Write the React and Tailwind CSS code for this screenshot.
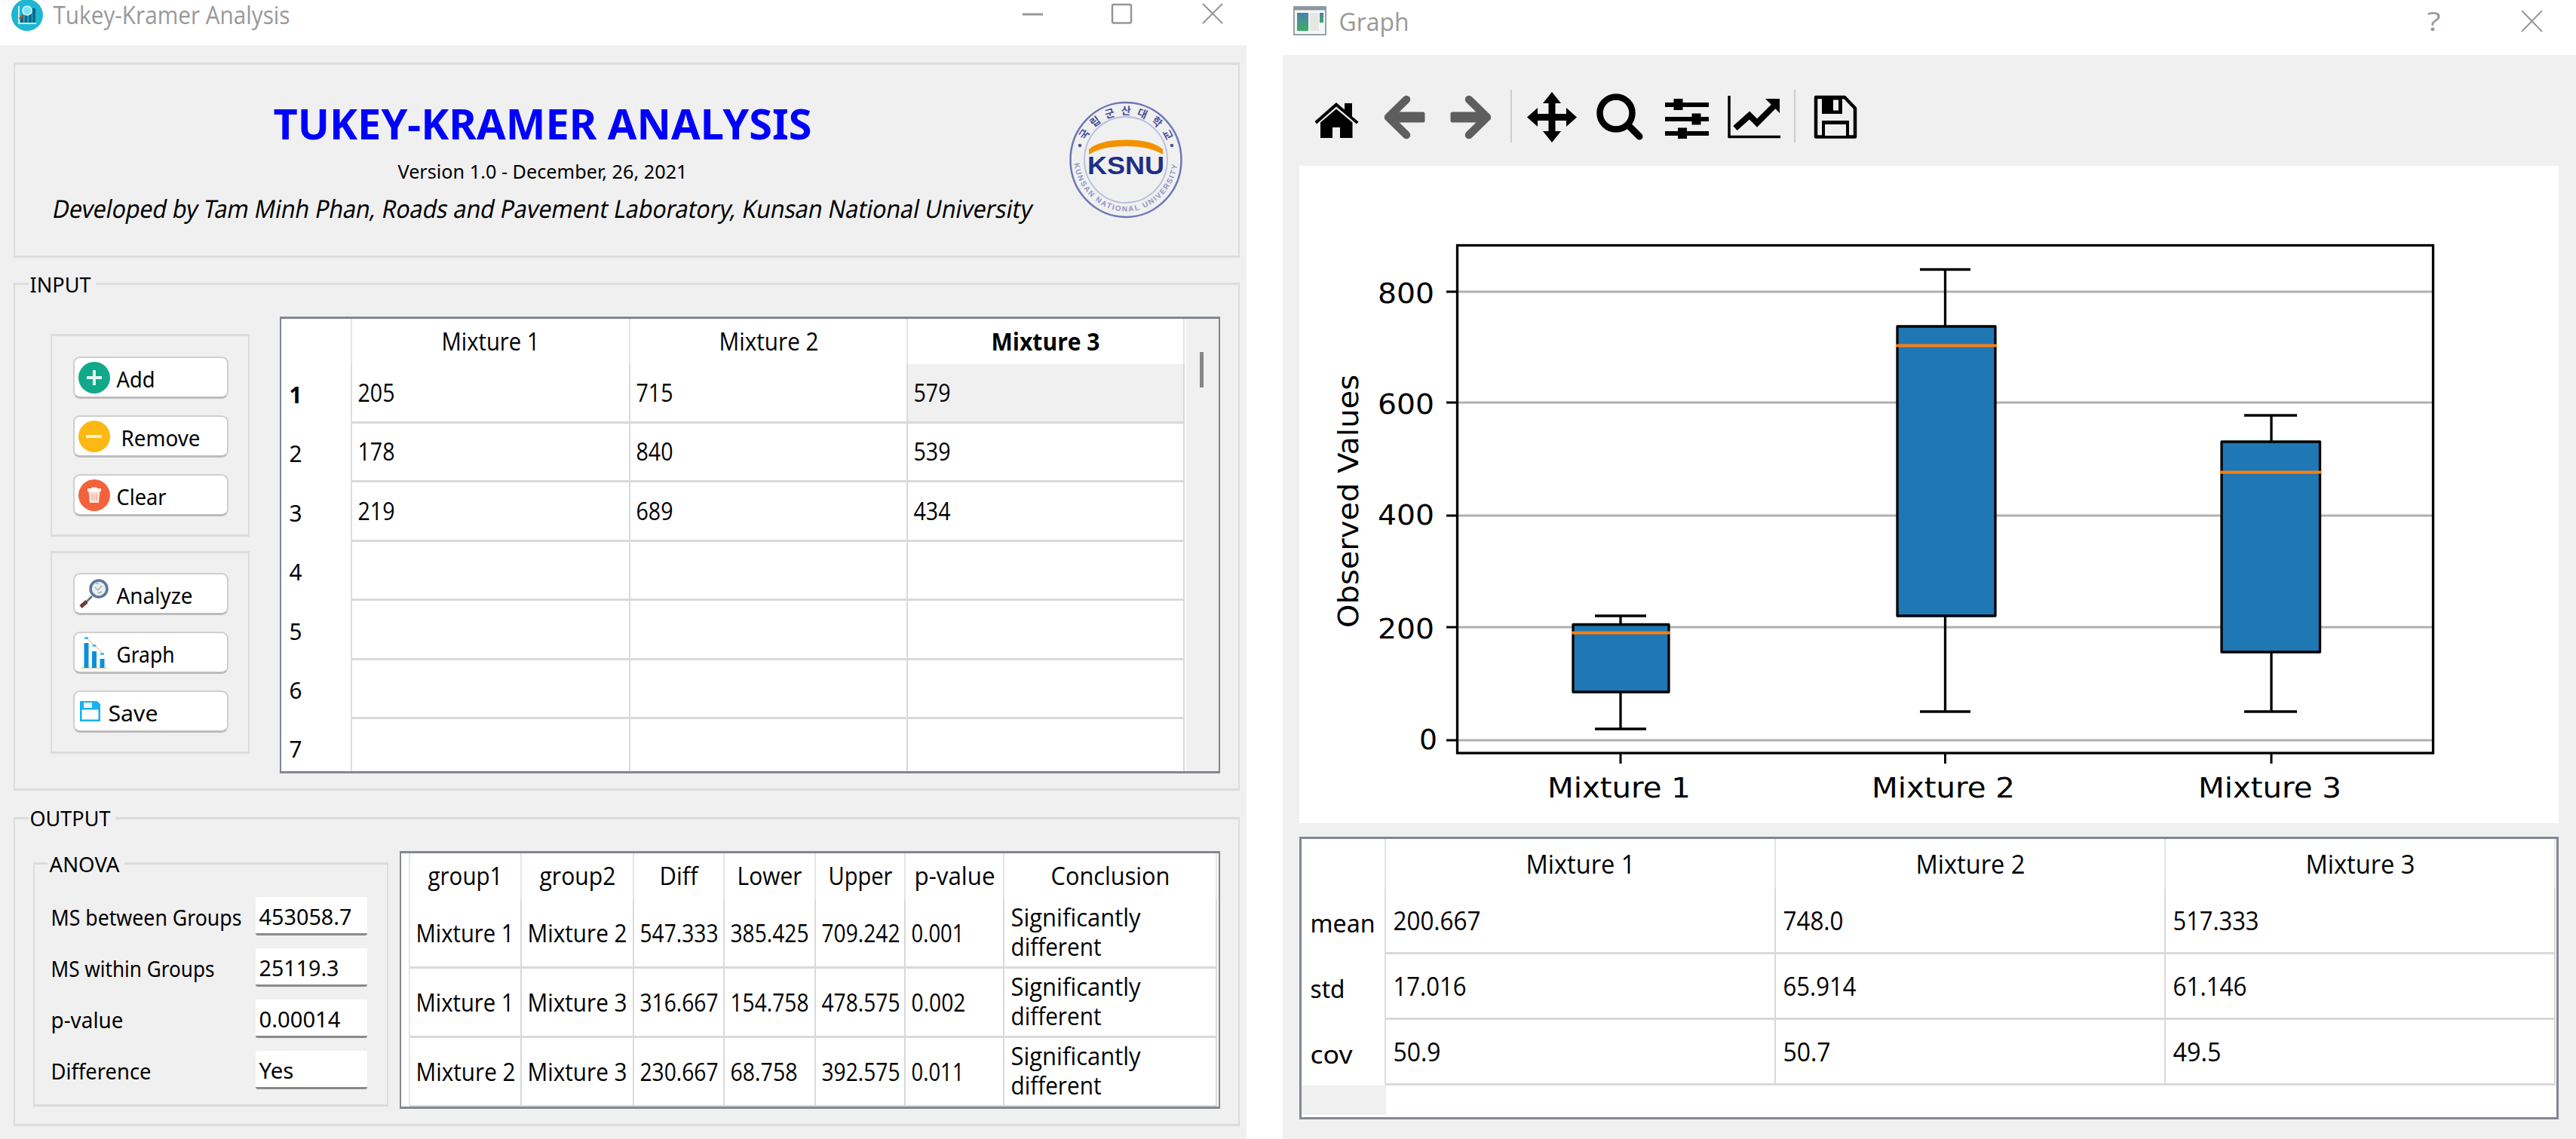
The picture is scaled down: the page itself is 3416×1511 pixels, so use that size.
import { useLayoutEffect, useRef } from "react";

const SEGOE = "font-['Open_Sans','Noto_Sans',sans-serif]";
const TAHOMA = "font-['Noto_Sans','Open_Sans',sans-serif]";

/* A single line of text condensed or widened to take exactly w pixels. */
function Fit({ w, children, className = "", skew = 0 }) {
  const ref = useRef(null);
  useLayoutEffect(() => {
    const el = ref.current;
    el.style.transform = "none";
    const natural = el.getBoundingClientRect().width;
    el.style.transform = `translateX(-1.5px) scaleX(${(w + 3) / natural}) skewX(${skew}deg)`;
  });
  return (
    <span className={`block shrink-0 whitespace-nowrap ${className}`} style={{ width: w }}>
      <span ref={ref} className="inline-block origin-left">
        {children}
      </span>
    </span>
  );
}

function GroupBox({ label, labelClass = "", className = "", children }) {
  return (
    <section className={`relative border-x-2 border-y-[3px] border-[#dcdcdc] ${className}`}>
      {label && <div className={`absolute bg-[#f0f0f0] ${TAHOMA} text-[28px] leading-[30px] ${labelClass}`}>{label}</div>}
      {children}
    </section>
  );
}

function AppIcon() {
  return (
    <svg className="h-[42px] w-[42px]" viewBox="0 0 42 42">
      <circle cx="21" cy="21" r="21" fill="#1fb6d2" />
      <path d="M10 9v23h23" fill="none" stroke="#c9eef5" strokeWidth="2" />
      <rect x="12" y="23" width="4" height="8" fill="#0c6a8c" />
      <rect x="17.500" y="18" width="4" height="13" fill="#0c6a8c" />
      <rect x="23" y="20" width="4" height="11" fill="#0c6a8c" />
      <rect x="28" y="12" width="4" height="19" fill="#0c6a8c" />
      <path d="M16 21l-5 5" stroke="#a5542c" strokeWidth="3" />
      <circle cx="21" cy="15" r="6" fill="#7fe3f5" stroke="#d5f6fb" strokeWidth="1.500" />
    </svg>
  );
}

function Logo() {
  return (
    <svg className="h-[156px] w-[152px]" viewBox="1418 134 152 156">
      <defs>
        <path id="ringTop" d="M1434.500 212a59.500 60 0 0 1 119 0" />
        <path id="ringBottom" d="M1424.500 205a69.500 75.500 0 0 0 139 0" />
      </defs>
      <ellipse cx="1494" cy="212" rx="73.500" ry="76" fill="none" stroke="#6f76b5" strokeWidth="2.500" />
      <ellipse cx="1494" cy="212" rx="55" ry="57" fill="none" stroke="#b9bcdc" strokeWidth="1.800" />
      <text fill="#4a5199" fontSize="14" fontWeight="700" fontFamily="Noto Sans CJK KR, sans-serif" textAnchor="middle" letterSpacing="7.500">
        <textPath href="#ringTop" startOffset="52%">국립군산대학교</textPath>
      </text>
      <text fill="#9094c4" fontSize="10" fontWeight="700" fontFamily="Liberation Sans, sans-serif" textAnchor="middle" letterSpacing="1.700">
        <textPath href="#ringBottom" startOffset="50%">KUNSAN NATIONAL UNIVERSITY</textPath>
      </text>
      <circle cx="1433" cy="193" r="2.300" fill="#4a5199" />
      <circle cx="1555" cy="193" r="2.300" fill="#4a5199" />
      <path d="M1445 205v-7q14-12.500 49-12.500t49 12.500v7q-17-11-49-11t-49 11z" fill="#f39200" />
      <text x="1443" y="231" textLength="102" lengthAdjust="spacingAndGlyphs" fill="#1f2f86" fontSize="34" fontWeight="700" fontFamily="Liberation Sans, sans-serif">KSNU</text>
    </svg>
  );
}

function Header() {
  return (
    <GroupBox className="flex h-[259px]">
      <div className={`flex w-[1352px] flex-col items-center pl-[47px] ${TAHOMA} text-black`}>
        <Fit w={711} className="mt-[48px] text-[55px] leading-[60px] font-bold text-[#0000ff]">TUKEY-KRAMER ANALYSIS</Fit>
        <Fit w={381} className="mt-[18px] text-[25px] leading-[30px]">Version 1.0 - December, 26, 2021</Fit>
        <Fit w={1296} skew={-12} className="mt-[15px] text-[33px] leading-[40px]">Developed by Tam Minh Phan, Roads and Pavement Laboratory, Kunsan National University</Fit>
      </div>
      <div className="mt-[48px] ml-[45px]">
        <Logo />
      </div>
    </GroupBox>
  );
}

const plusIcon = (
  <svg className="size-[42px]" viewBox="0 0 42 42">
    <circle cx="21" cy="21" r="21" fill="#12a88a" />
    <path d="M21 11v20M11 21h20" stroke="#e3f7f2" strokeWidth="4" />
  </svg>
);
const minusIcon = (
  <svg className="size-[42px]" viewBox="0 0 42 42">
    <circle cx="21" cy="21" r="21" fill="#fdb813" />
    <path d="M10 21h21" stroke="#fff1cc" strokeWidth="4" />
  </svg>
);
const trashIcon = (
  <svg className="size-[42px]" viewBox="0 0 42 42">
    <circle cx="21" cy="21" r="21" fill="#f4623a" />
    <path d="M12 12h5l1-1.500h6l1 1.500h5v4H12z" fill="#fff" />
    <path d="M13.500 16h15l-1.500 15H15z" fill="#fbe3dc" />
    <path d="M18 19v9M21 19v9M24 19v9" stroke="#eab5a5" strokeWidth="1.500" />
  </svg>
);
const lensIcon = (
  <svg className="h-[42px] w-[42px]" viewBox="104 768 42 42">
    <path d="M122 792l-8 8" stroke="#5f6f7d" strokeWidth="2.500" />
    <path d="M107 806l8-7" stroke="#6b4030" strokeWidth="5" />
    <circle cx="131" cy="782" r="11" fill="#e8edf0" stroke="#5b7899" strokeWidth="3.500" />
    <path d="M126 780l4 4 5-6M130 788l5-2M127 775h4" fill="none" stroke="#a6aeb4" strokeWidth="1.500" />
  </svg>
);
const barsIcon = (
  <svg className="h-[42px] w-[42px]" viewBox="104 846 42 42">
    <path d="M114 847l22 20" stroke="#f3d3b0" strokeWidth="1.500" />
    <path d="M108 887.300h34" stroke="#ecc9a4" strokeWidth="1.500" />
    <path d="M112 847.500h5M122.500 857.500h5M133 868.500h5" stroke="#35b6ee" strokeWidth="2.500" />
    <path d="M111.500 854h6v33h-6zM122 865h6v22h-6zM132.500 875h6v12h-6z" fill="#0c8fdc" />
  </svg>
);
const diskIcon = (
  <svg className="h-[42px] w-[31px]" viewBox="104 925 31 42">
    <path d="M106 932h22.500l4.500 4v23h-27z" fill="#16b1f1" />
    <path d="M111 934h11v7h-11z" fill="#e6f8ff" />
    <path d="M108.500 943.500h22v13h-22z" fill="#fff" />
  </svg>
);

function Button({ icon, w, children, gap = "gap-[10px]" }) {
  return (
    <button className={`flex h-[56px] w-[206px] items-center rounded-[9px] border-2 border-b-[3px] border-[#cfcfcf] border-b-[#bcbcbc] bg-white pl-[5px] ${gap}`}>
      {icon}
      <Fit w={w} className={`pt-[5px] text-left ${TAHOMA} text-[29px] leading-[32px]`}>{children}</Fit>
    </button>
  );
}

function ButtonGroups() {
  return (
    <div className="mt-[65px] ml-[47px] flex w-[264px] flex-col gap-[19px]">
      <GroupBox className="flex h-[269px] flex-col gap-[22px] pt-[27px] pl-[28px]">
        <Button icon={plusIcon} w={48}>Add</Button>
        <Button icon={minusIcon} w={102} gap="gap-[16px]">Remove</Button>
        <Button icon={trashIcon} w={63}>Clear</Button>
      </GroupBox>
      <GroupBox className="flex h-[269px] flex-col gap-[22px] pt-[26px] pl-[28px]">
        <Button icon={lensIcon} w={98}>Analyze</Button>
        <Button icon={barsIcon} w={74}>Graph</Button>
        <Button icon={diskIcon} w={63}>Save</Button>
      </GroupBox>
    </div>
  );
}

const inputRows = [
  ["1", "205", "715", "579"],
  ["2", "178", "840", "539"],
  ["3", "219", "689", "434"],
  ["4", "", "", ""],
  ["5", "", "", ""],
  ["6", "", "", ""],
  ["7", "", "", ""],
];

function InputTable() {
  return (
    <div className={`mt-[42px] ml-[40px] flex h-[606px] w-[1247px] overflow-hidden border-x-2 border-y-[3px] border-[#828790] bg-white ${SEGOE} text-[32px]`}>
      <div className="w-[1198px]">
        <div className="grid h-[60px] grid-cols-[94px_369px_368px_367px] leading-[60px]">
          <div className="border-r-2 border-[#e5e5e5]" />
          <div className="flex justify-center border-r-2 border-[#e5e5e5]"><Fit w={127}>Mixture 1</Fit></div>
          <div className="flex justify-center border-r-2 border-[#e5e5e5]"><Fit w={129}>Mixture 2</Fit></div>
          <div className="flex justify-center border-r-2 border-[#e5e5e5]"><Fit w={141} className="font-bold">Mixture 3</Fit></div>
        </div>
        {inputRows.map((row, r) => (
          <div key={row[0]} className="grid h-[78.4px] grid-cols-[94px_369px_368px_367px] leading-[76px]">
            <div className={`border-r-2 border-[#dedede] pt-[3px] pl-[12px] ${TAHOMA} text-[30px] ${r === 0 ? "font-bold" : ""}`}>
              <Fit w={14}>{row[0]}</Fit>
            </div>
            {row.slice(1).map((v, c) => (
              <div key={c} className={`border-r-2 border-b-[3px] border-[#d9d9d9] pl-[9px] ${r === 0 && c === 2 ? "bg-[#f0f0f0]" : ""}`}>
                {v && <Fit w={46}>{v}</Fit>}
              </div>
            ))}
          </div>
        ))}
      </div>
      <div className="ml-[2px] flex-1 bg-[#f0f0f0]">
        <div className="mt-[44px] ml-[18px] h-[47px] w-[5px] bg-[#868686]" />
      </div>
    </div>
  );
}

const anova = [
  ["MS between Groups", 250, "453058.7", 120],
  ["MS within Groups", 214, "25119.3", 103],
  ["p-value", 93, "0.00014", 105],
  ["Difference", 130, "Yes", 43],
];

function Anova() {
  return (
    <GroupBox className="mt-[57px] ml-[24px] h-[324px] w-[471px] pt-[43px] pl-[23px]" label={<Fit w={90}>ANOVA</Fit>} labelClass="left-[17px] -top-[16px] pl-[4px] pr-[8px]">
      {anova.map(([label, lw, value, vw]) => (
        <div key={label} className={`flex h-[68px] items-start ${TAHOMA} text-[29px]`}>
          <Fit w={lw} className="pt-[8px] leading-[38px]">{label}</Fit>
          <div className="mr-[26px] ml-auto h-[51px] w-[148px] rounded-[3px] border-b-[3px] border-[#8a8a8a] bg-white pt-[7px] pl-[6px] leading-[38px]">
            <Fit w={vw}>{value}</Fit>
          </div>
        </div>
      ))}
    </GroupBox>
  );
}

const resultHead = [["group1", 96], ["group2", 98], ["Diff", 48], ["Lower", 83], ["Upper", 82], ["p-value", 104], ["Conclusion", 155]];
const resultRows = [
  [["Mixture 1", 127], ["Mixture 2", 129], ["547.333", 101], ["385.425", 101], ["709.242", 101], ["0.001", 67]],
  [["Mixture 1", 127], ["Mixture 3", 129], ["316.667", 101], ["154.758", 101], ["478.575", 101], ["0.002", 69]],
  [["Mixture 2", 129], ["Mixture 3", 129], ["230.667", 101], ["68.758", 86], ["392.575", 101], ["0.011", 67]],
];

function ResultTable() {
  return (
    <div className={`mt-[42px] ml-[15px] h-[342px] w-[1088px] overflow-hidden border-x-2 border-y-[3px] border-[#828790] bg-white ${SEGOE} text-[32px]`}>
      <div className="grid h-[61px] grid-cols-[12px_148px_149px_120px_121px_119px_131px_282px] leading-[60px]">
        <div className="border-r-2 border-[#e5e5e5]" />
        {resultHead.map(([t, w]) => (
          <div key={t} className="flex justify-center border-r-2 border-[#e5e5e5]"><Fit w={w}>{t}</Fit></div>
        ))}
      </div>
      {resultRows.map((row, r) => (
        <div key={r} className="grid h-[91.8px] grid-cols-[12px_148px_149px_120px_121px_119px_131px_282px] leading-[89px]">
          <div className="border-r-2 border-[#e5e5e5]" />
          {row.map(([t, w], c) => (
            <div key={c} className="border-r-2 border-b-[3px] border-[#d9d9d9] pl-[9px]"><Fit w={w}>{t}</Fit></div>
          ))}
          <div className="border-r-2 border-b-[3px] border-[#d9d9d9] pt-[4px] pl-[10px] leading-[39px]">
            <Fit w={169}>Significantly</Fit>
            <Fit w={117}>different</Fit>
          </div>
        </div>
      ))}
    </div>
  );
}

function MainWindow() {
  return (
    <div className="h-[1511px] w-[1653px] bg-[#f0f0f0]">
      <div className="flex h-[60px] items-start bg-white">
        <div className="flex h-[39px] flex-1 items-center pl-[15px] text-[#999]">
          <AppIcon />
          <Fit w={311} className={`ml-[15px] ${SEGOE} text-[32px] leading-[38px]`}>Tukey-Kramer Analysis</Fit>
        </div>
        <svg className="mr-[31px] h-[40px] w-[268px]" viewBox="1354 0 268 40" fill="none" stroke="#969696" strokeWidth="2.500">
          <path d="M1356 19h27" strokeWidth="3" />
          <rect x="1475" y="6" width="25" height="24.500" rx="2" />
          <path d="M1595 5l26 26M1621 5l-26 26" strokeWidth="2" />
        </svg>
      </div>
      <div className="pt-[23px] pr-[9px] pl-[18px]">
        <Header />
        <GroupBox className="mt-[33px] flex h-[674px]" label={<Fit w={78}>INPUT</Fit>} labelClass="left-[18px] -top-[16px] pl-[3px] pr-[8px]">
          <ButtonGroups />
          <InputTable />
        </GroupBox>
        <GroupBox className="mt-[35px] flex h-[410px]" label={<Fit w={104}>OUTPUT</Fit>} labelClass="left-[18px] -top-[17px] pl-[3px] pr-[8px]">
          <Anova />
          <ResultTable />
        </GroupBox>
      </div>
    </div>
  );
}

function Tool({ x, w, gap, children }) {
  return (
    <svg className={`h-[70px] shrink-0 ${gap}`} width={w} viewBox={`${x} 119 ${w} 70`} overflow="visible">
      {children}
    </svg>
  );
}

function Toolbar() {
  return (
    <div className="flex h-[147px] items-start pt-[46px]">
      <Tool x={1743} w={58} gap="ml-[42px]">
        <path d="M1743.500 161l28.500-25 11 9.500V137h10v17.500l8.500 7-2.500 3-27-23-26 23z" />
        <path d="M1751 162.500l21-18 21.500 18V183H1777v-14h-10v14h-16z" />
      </Tool>
      <Tool x={1835} w={55} gap="ml-[34px]">
        <path d="M1865 132l-24 23.500 24 23.500" fill="none" stroke="#5e5e5e" strokeWidth="10.500" strokeLinecap="round" strokeLinejoin="round" />
        <path d="M1842 148.500h45q2.500 0 2.500 2.500v9q0 2.500-2.500 2.500h-45z" fill="#5e5e5e" />
      </Tool>
      <Tool x={1923} w={55} gap="ml-[33px]">
        <path d="M1948 132l24 23.500-24 23.500" fill="none" stroke="#5e5e5e" strokeWidth="10.500" strokeLinecap="round" strokeLinejoin="round" />
        <path d="M1971 148.500h-45q-2.500 0-2.500 2.500v9q0 2.500 2.500 2.500h45z" fill="#5e5e5e" />
      </Tool>
      <div className="ml-[25px] h-[70px] w-[2px] bg-[#cdcdcd]" />
      <Tool x={2025} w={66} gap="ml-[20px]">
        <path d="M2058 122l12 15h-7.500v14h14.500v-8l14 12.500-14 12.500v-8h-14.500v14h7.500l-12 15-12-15h7.500v-14H2039v8l-14-12.500 14-12.500v8h14.500v-14h-7.500z" />
      </Tool>
      <Tool x={2117} w={62} gap="ml-[26px]">
        <ellipse cx="2143" cy="150" rx="21.500" ry="21.500" fill="none" stroke="#000" strokeWidth="8.500" />
        <path d="M2160 167l14 14" stroke="#000" strokeWidth="9" strokeLinecap="round" />
      </Tool>
      <Tool x={2208} w={58} gap="ml-[29px]">
        <path d="M2208 139h58M2208 158h58M2208 177h58" stroke="#000" strokeWidth="6" />
        <path d="M2219.500 131h12v15h-12zM2243.500 150.500h12v15h-12zM2225 169.500h12v14.500h-12z" />
      </Tool>
      <Tool x={2292} w={69} gap="ml-[26px]">
        <path d="M2293 127v56M2292 181.500h69" fill="none" stroke="#000" strokeWidth="3.500" />
        <path d="M2301 170l19-17 10 10 24-24" fill="none" stroke="#000" strokeWidth="8" />
        <path d="M2341 131h19v19z" />
      </Tool>
      <div className="ml-[18px] h-[70px] w-[2px] bg-[#cdcdcd]" />
      <Tool x={2405} w={57} gap="ml-[24px]">
        <path d="M2408 129h38l14 14.500v38h-52z" fill="none" stroke="#000" strokeWidth="4.500" strokeLinejoin="round" />
        <path d="M2416 129h27v22h-27zM2416 160h36v22h-36z" />
        <path d="M2431 132.500h7v14h-7zM2420 165h28v15h-28z" fill="#f0f0f0" />
      </Tool>
    </div>
  );
}

const boxes = [
  { x: 2149, l: 2086, r: 2213, cl: 2115, cr: 2183, top: 817, q3: 828.5, med: 839.5, q1: 918, bot: 967 },
  { x: 2579.5, l: 2516, r: 2646, cl: 2546, cr: 2613, top: 357.5, q3: 433, med: 458.5, q1: 817, bot: 944 },
  { x: 3012, l: 2946, r: 3076.5, cl: 2976, cr: 3046, top: 551, q3: 586, med: 626.5, q1: 865, bot: 944 },
];
const yTicks = [["800", 387], ["600", 534], ["400", 684], ["200", 832], ["0", 982]];

function BoxPlot() {
  return (
    <svg className="block h-[872px] w-[1670px] bg-white" viewBox="1723 220 1670 872" fontFamily="DejaVu Sans, sans-serif" fontSize="38" stroke="#000" strokeWidth="3">
      {yTicks.map(([t, y], i) => (
        <g key={t}>
          <path d={`M1933 ${y}H3226`} stroke="#b0b0b0" />
          <path d={`M1918 ${y}h14`} />
          <text x={i === 4 ? 1882 : 1827} y={[401.5, 549, 696, 846.5, 994][i]} textLength={i === 4 ? 24 : 75} lengthAdjust="spacingAndGlyphs" stroke="none">{t}</text>
        </g>
      ))}
      {boxes.map((b, i) => (
        <g key={b.x} fill="none">
          <rect x={b.l} y={b.q3} width={b.r - b.l} height={b.q1 - b.q3} fill="#1f77b4" strokeWidth="3.300" strokeLinejoin="round" />
          <path d={`M${b.x} ${b.q3}V${b.top}M${b.x} ${b.q1}V${b.bot}M${b.cl} ${b.top}H${b.cr}M${b.cl} ${b.bot}H${b.cr}`} strokeWidth="3.300" />
          <path d={`M${b.l - 2} ${b.med}H${b.r + 2}`} stroke="#ff7f0e" strokeWidth="4" />
          <path d={`M${b.x} 999v14`} />
          <text x={[2052, 2482, 2915][i]} y="1057.500" textLength="190" lengthAdjust="spacingAndGlyphs" fill="#000" stroke="none">{`Mixture ${i + 1}`}</text>
        </g>
      ))}
      <rect x="1932.500" y="325.500" width="1294" height="673.500" fill="none" strokeWidth="3.300" />
      <text transform="translate(1801 833) rotate(-90)" textLength="336" lengthAdjust="spacingAndGlyphs" stroke="none">Observed Values</text>
    </svg>
  );
}

const stats = [
  ["mean", 83, ["200.667", 113], ["748.0", 77], ["517.333", 111]],
  ["std", 43, ["17.016", 94], ["65.914", 94], ["61.146", 95]],
  ["cov", 53, ["50.9", 60], ["50.7", 60], ["49.5", 61]],
];

function StatsTable() {
  return (
    <div className={`mt-[18px] h-[375px] w-[1670px] overflow-hidden border-x-[3px] border-y-[3px] border-[#828790] bg-white ${SEGOE} text-[34.500px]`}>
      <div className="grid h-[66px] grid-cols-[112px_517px_517px_517px] leading-[66px]">
        <div className="border-r-2 border-[#e5e5e5]" />
        {["Mixture 1", "Mixture 2", "Mixture 3"].map((t) => (
          <div key={t} className="flex justify-center border-r-2 border-[#e5e5e5]"><Fit w={142}>{t}</Fit></div>
        ))}
      </div>
      {stats.map(([label, lw, ...cells]) => (
        <div key={label} className="grid h-[87px] grid-cols-[112px_517px_517px_517px] leading-[83px]">
          <div className={`border-r-2 border-[#dedede] pt-[4px] pl-[13px] ${TAHOMA} text-[32px]`}><Fit w={lw}>{label}</Fit></div>
          {cells.map(([t, w]) => (
            <div key={t} className="border-r-2 border-b-[3px] border-[#d9d9d9] pl-[11px]"><Fit w={w}>{t}</Fit></div>
          ))}
        </div>
      ))}
      <div className="h-[39px] w-[112px] bg-[#f0f0f0]" />
    </div>
  );
}

function GraphWindow() {
  return (
    <div className="h-[1511px] flex-1 bg-[#f0f0f0]">
      <div className="flex h-[73px] items-start bg-white text-[#999]">
        <div className="flex h-[56px] flex-1 items-center pl-[14px]">
          <svg className="h-[40px] w-[44px]" viewBox="0 0 44 40">
            <rect x="1" y="1" width="42" height="37" fill="#f5f6f7" stroke="#9aa0a6" strokeWidth="2" />
            <path d="M1 3.500h42" stroke="#8d959c" strokeWidth="4" />
            <path d="M36 3.500h4" stroke="#5aa9d6" strokeWidth="2" />
            <defs>
              <linearGradient id="pane" x2="0" y2="1">
                <stop offset="0" stopColor="#4a7fb0" />
                <stop offset="1" stopColor="#3fae62" />
              </linearGradient>
            </defs>
            <rect x="5" y="9" width="15" height="24" fill="url(#pane)" />
            <rect x="22" y="9" width="12" height="24" fill="#e6e6e6" />
            <rect x="35" y="9" width="5" height="13" fill="url(#pane)" />
          </svg>
          <Fit w={90} className={`mt-[2px] ml-[18px] ${SEGOE} text-[33px] leading-[40px]`}>Graph</Fit>
        </div>
        <div className={`flex h-[56px] items-center ${SEGOE} text-[34px]`}>
          <Fit w={15}>?</Fit>
          <svg className="mr-[44px] ml-[108px] h-[28px] w-[29px]" viewBox="0 0 29 28" stroke="#969696" strokeWidth="2">
            <path d="M1 0l27 28M28 0L1 28" />
          </svg>
        </div>
      </div>
      <Toolbar />
      <div className="pl-[22px]">
        <BoxPlot />
        <StatsTable />
      </div>
    </div>
  );
}

export default function App() {
  return (
    <main className="flex h-[1511px] w-[3416px] gap-[48px] overflow-hidden bg-white text-black">
      <MainWindow />
      <GraphWindow />
    </main>
  );
}
